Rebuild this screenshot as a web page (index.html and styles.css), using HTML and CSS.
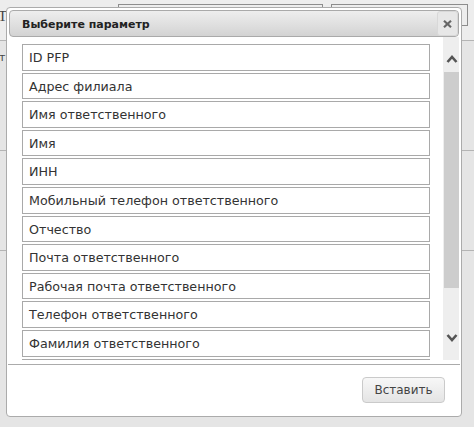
FILE: index.html
```html
<!DOCTYPE html>
<html lang="ru">
<head>
  <meta charset="UTF-8" />
  <meta name="viewport" content="width=device-width, initial-scale=1" />
  <title>Выберите параметр</title>
  <link rel="stylesheet" href="styles.css">
</head>
<body>
  <!-- page behind the modal -->
  <div class="page">
    <div class="toolbar">
      <span class="tb-label">Т</span>
      <span class="tb-field tb-wide"></span>
      <span class="tb-field"></span>
    </div>
    <div class="row"><span class="row-label">т</span></div>
    <div class="row"></div>
  </div>

  <div class="dialog">
    <div class="dlg-head">
      <span class="dlg-title">Выберите параметр</span>
      <button class="dlg-close" title="Закрыть">
        <svg width="9" height="8" viewBox="0 0 9 8"><path d="M1 0.8 L8 7.2 M8 0.8 L1 7.2" stroke="#666" stroke-width="2.2" fill="none"/></svg>
      </button>
    </div>

    <div class="dlg-body">
      <div class="list">
        <div class="item">ID PFP</div>
        <div class="item">Адрес филиала</div>
        <div class="item">Имя ответственного</div>
        <div class="item">Имя</div>
        <div class="item">ИНН</div>
        <div class="item">Мобильный телефон ответственного</div>
        <div class="item">Отчество</div>
        <div class="item">Почта ответственного</div>
        <div class="item">Рабочая почта ответственного</div>
        <div class="item">Телефон ответственного</div>
        <div class="item">Фамилия ответственного</div>
        <div class="item"></div>
      </div>
      <div class="scrollbar">
        <div class="sb-up">
          <svg width="12" height="8" viewBox="0 0 12 8"><path d="M1.5 7 L6 2 L10.5 7" stroke="#555" stroke-width="2.6" fill="none"/></svg>
        </div>
        <div class="sb-thumb"></div>
        <div class="sb-rest">
          <svg width="12" height="8" viewBox="0 0 12 8"><path d="M1.5 1 L6 6 L10.5 1" stroke="#555" stroke-width="2.6" fill="none"/></svg>
        </div>
      </div>
    </div>

    <div class="dlg-foot">
      <button class="btn">Вставить</button>
    </div>
  </div>
</body>
</html>
```

FILE: styles.css
```css
* {
  box-sizing: border-box;
}

body {
  margin: 0;
  background: #e5e5e5;
  font-family: "DejaVu Sans", Verdana, sans-serif;
  overflow: hidden;
}

/* page under the overlay */
.page {
  height: 427px;
}

.toolbar {
  display: flex;
  align-items: flex-start;
  height: 41px;
  background: #ededed;
  border-bottom: 1px solid #b4b4b4;
}

.tb-label {
  font-family: "Liberation Serif", serif;
  font-size: 15px;
  color: #444;
  margin: 8px 0 0 -2px;
  width: 120px;
}

.tb-field {
  height: 22px;
  margin-top: 4px;
  border: 1px solid #8c8c8c;
  width: 137px;
  margin-left: 8px;
}

.tb-wide {
  width: 205px;
  height: 40px;
  margin-left: 0;
  border-bottom: none;
}

.row {
  height: 100px;
  border-bottom: 1px solid #b4b4b4;
}

.row-label {
  display: block;
  font-size: 11px;
  color: #444;
  margin: 10px 0 0 -1px;
}

/* modal */
.dialog {
  position: absolute;
  left: 6px;
  top: 7px;
  width: 456px;
  height: 410px;
  background: #fff;
  border: 1px solid #ababab;
  border-radius: 4px;
  padding: 2px 2px 0 2px;
  display: flex;
  flex-direction: column;
}

.dlg-head {
  height: 27px;
  display: flex;
  align-items: center;
  justify-content: space-between;
  padding-left: 12px;
  border: 1px solid #aaa;
  border-radius: 4px;
  background: linear-gradient(to bottom, #eeeeee, #d3d3d3);
}

.dlg-title {
  font-weight: bold;
  font-size: 11px;
  color: #222;
  padding-top: 1px;
}

.dlg-close {
  width: 21px;
  height: 25px;
  padding: 0;
  border: 1px solid #d8d8d8;
  border-radius: 3px;
  background: #e7e7e7;
  display: flex;
  align-items: center;
  justify-content: center;
}

.dlg-body {
  display: flex;
  height: 323px;
}

.list {
  flex: 1;
  overflow: hidden;
  padding: 7px 13px 0 13px;
}

.item {
  height: 26.6px;
  margin-bottom: 2px;
  border: 1px solid #a9a9a9;
  padding: 2px 0 0 6px;
  font-size: 12.7px;
  line-height: 22.6px;
  color: #333;
  white-space: nowrap;
}

.scrollbar {
  width: 16px;
  background: #eeeeee;
  display: flex;
  flex-direction: column;
}

.sb-up {
  height: 35px;
  display: flex;
  justify-content: center;
  padding: 18px 0 0 1px;
}

.sb-thumb {
  height: 216px;
  margin-left: 1px;
  background: #cdcdcd;
}

.sb-rest {
  flex: 1;
  display: flex;
  justify-content: center;
  padding: 46px 0 0 1px;
}

.dlg-foot {
  margin: 4px -1px 0 -1px;
  border-top: 1px solid #ababab;
  padding: 12px 15px 0 0;
  display: flex;
  justify-content: flex-end;
}

.btn {
  width: 83px;
  height: 26px;
  border: 1px solid #cacaca;
  border-radius: 4px;
  background: linear-gradient(to bottom, #f7f7f7, #e4e4e4);
  font-family: "DejaVu Sans", Verdana, sans-serif;
  font-size: 12px;
  color: #444;
  cursor: pointer;
}
```
